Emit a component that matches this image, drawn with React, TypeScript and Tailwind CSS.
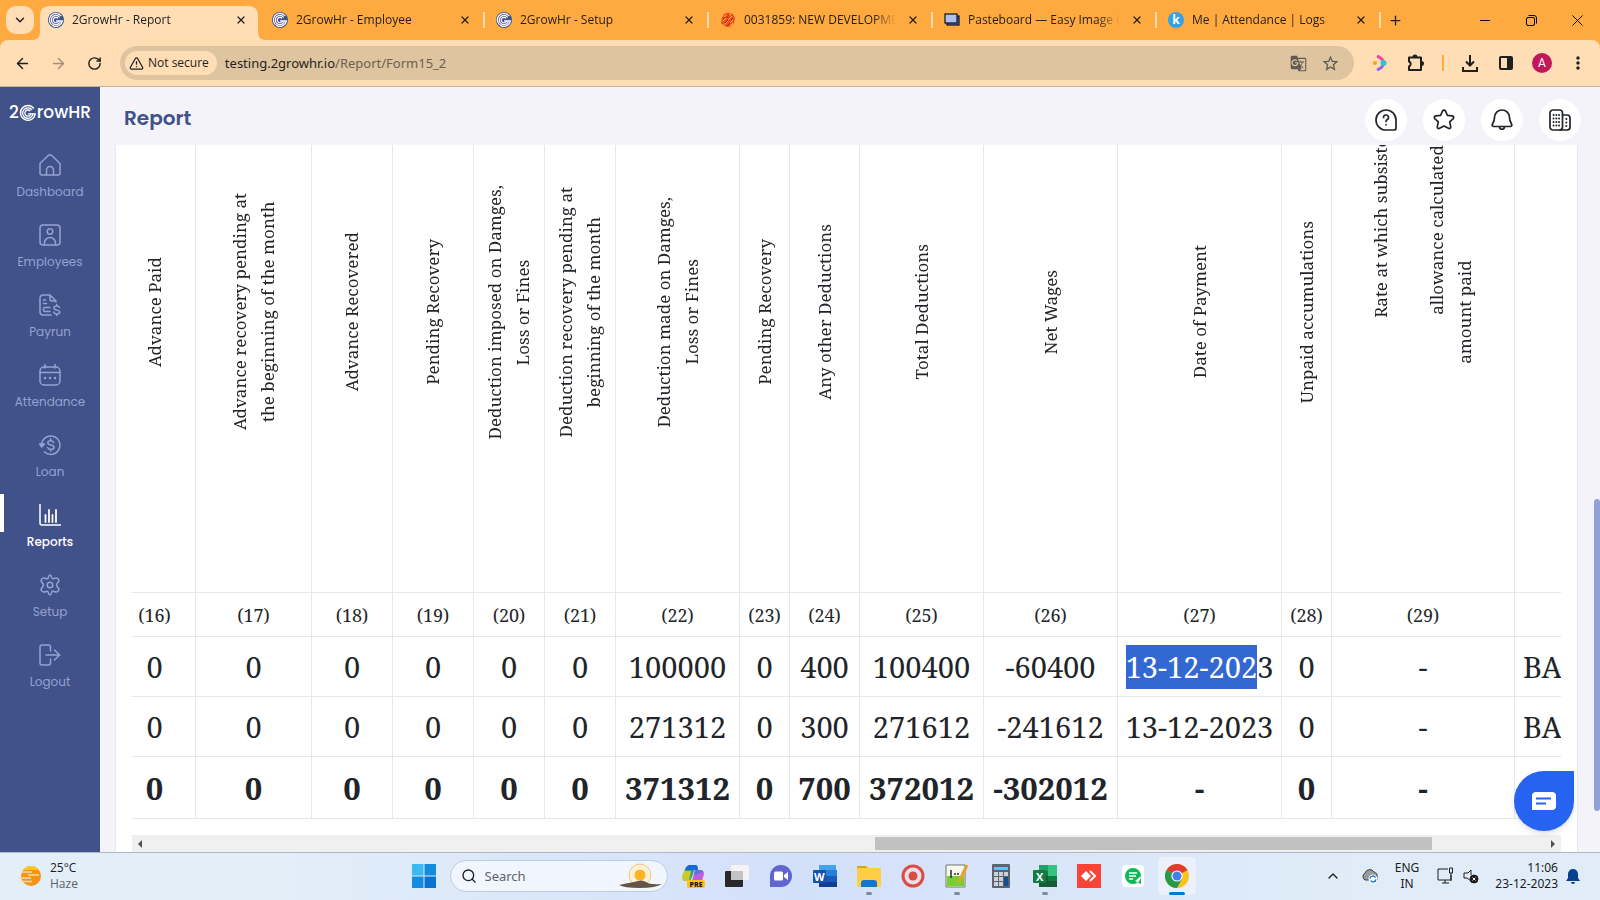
import type { ReactNode } from 'react';
import { ArrowLeft, ArrowRight, RotateCw, TriangleAlert, X, Plus, ChevronDown, ChevronUp, Search } from 'lucide-react';
import { MdGTranslate, MdStarBorder, MdMoreVert } from 'react-icons/md';

const tabs = [
  { title: '2GrowHr - Report', icon: 'grow', active: true },
  { title: '2GrowHr - Employee', icon: 'grow' },
  { title: '2GrowHr - Setup', icon: 'grow' },
  { title: '0031859: NEW DEVELOPMENT', icon: 'mantis' },
  { title: 'Pasteboard — Easy Image Up', icon: 'paste' },
  { title: 'Me | Attendance | Logs', icon: 'keka' },
];

const navItems = ['Dashboard', 'Employees', 'Payrun', 'Attendance', 'Loan', 'Reports', 'Setup', 'Logout'];

type Column = { no: string; lines: string[]; values: string[]; width: string };

const columns: Column[] = [
  { no: '(16)', lines: ['Advance Paid'], values: ['0', '0', '0'], width: 'w-16' },
  { no: '(17)', lines: ['Advance recovery pending at', 'the beginning of the month'], values: ['0', '0', '0'], width: 'w-[116px]' },
  { no: '(18)', lines: ['Advance Recovered'], values: ['0', '0', '0'], width: 'w-[81px]' },
  { no: '(19)', lines: ['Pending Recovery'], values: ['0', '0', '0'], width: 'w-[81px]' },
  { no: '(20)', lines: ['Deduction imposed on Damges,', 'Loss or Fines'], values: ['0', '0', '0'], width: 'w-[71px]' },
  { no: '(21)', lines: ['Deduction recovery pending at', 'beginning of the month'], values: ['0', '0', '0'], width: 'w-[71px]' },
  { no: '(22)', lines: ['Deduction made on Damges,', 'Loss or Fines'], values: ['100000', '271312', '371312'], width: 'w-[124px]' },
  { no: '(23)', lines: ['Pending Recovery'], values: ['0', '0', '0'], width: 'w-[50px]' },
  { no: '(24)', lines: ['Any other Deductions'], values: ['400', '300', '700'], width: 'w-[70px]' },
  { no: '(25)', lines: ['Total Deductions'], values: ['100400', '271612', '372012'], width: 'w-[124px]' },
  { no: '(26)', lines: ['Net Wages'], values: ['-60400', '-241612', '-302012'], width: 'w-[134px]' },
  { no: '(27)', lines: ['Date of Payment'], values: ['13-12-2023', '13-12-2023', '-'], width: 'w-[164px]' },
  { no: '(28)', lines: ['Unpaid accumulations'], values: ['0', '0', '0'], width: 'w-[50px]' },
  { no: '(29)', lines: ['Rate at which subsistence', '', 'allowance calculated', 'amount paid'], values: ['-', '-', '-'], width: 'w-[183px]' },
];

function GrowMark({ size, ring }: { size: number; ring?: boolean }) {
  return (
    <svg width={size} height={size} viewBox="0 0 20 20" fill="none" stroke="#fff" strokeWidth="1.5">
      {ring && <circle cx="10" cy="10" r="10" fill="#41518a" stroke="none" />}
      <path d="M16.5 5A8.2 8.2 0 1 0 18 11H10" />
      <path d="M14.5 6.6A5.8 5.8 0 1 0 15.600 11" />
      <path d="M12.600 8A3.4 3.4 0 1 0 13.200 11" />
    </svg>
  );
}

function TabIcon({ name }: { name: string }) {
  if (name === 'grow') return <GrowMark size={16} ring />;
  if (name === 'mantis') {
    return (
      <svg width="16" height="16" viewBox="0 0 16 16">
        <path d="M4 2l4-1.500 5 1.500 2 4-1 5-4 4-5-.5-4-3.500 1-5z" fill="#f0501e" />
        <path d="M4 5l2-2M8 4l3-2M3 9l3-3M8 8l4-4M4 13l4-4M8 13l5-5M10 14l3-3" stroke="#ffb04a" strokeWidth="1" fill="none" />
        <path d="M3 7l2-2M7 6l2-3M5 11l3-3M11 8l2-2M7 14l3-3" stroke="#9c2410" strokeWidth="1" fill="none" />
      </svg>
    );
  }
  if (name === 'paste') {
    return (
      <svg width="16" height="16" viewBox="0 0 16 16" stroke="#0b1026" strokeWidth="1.200">
        <rect x="3" y="4" width="12" height="9" fill="#5c79c4" />
        <rect x="1" y="2" width="12" height="9" fill="#b0c0ea" />
      </svg>
    );
  }
  return (
    <span className="flex size-4 items-center justify-center rounded-full bg-[#35a0e8] text-xs leading-4 font-bold text-white">k</span>
  );
}

function NavIcon({ name }: { name: string }) {
  const shapes: Record<string, ReactNode> = {
    Dashboard: <path d="M1 9.500 9 1.700a3 3 0 0 1 4 0L21 9.500V19a2 2 0 0 1-2 2H3a2 2 0 0 1-2-2zM7.500 21v-5a3.500 3.500 0 0 1 7 0v5" />,
    Employees: (
      <>
        <rect x="1" y="1" width="20" height="20" rx="3" />
        <circle cx="11" cy="7.500" r="2.800" />
        <path d="M5.500 20.500v-1.500a5.500 5.500 0 0 1 11 0v1.500" />
      </>
    ),
    Payrun: (
      <>
        <path d="M12 21H4a3 3 0 0 1-3-3V4a3 3 0 0 1 3-3h7l6 6v1M11 1v4a2 2 0 0 0 2 2h4M4.500 6h2M4.500 9.500h3M11 13.500H6a1.500 1.500 0 0 0-1.500 1.500v1a1.500 1.500 0 0 0 1.500 1.500h5" />
        <path d="M20.500 13.500c-.5-1.200-1.500-1.500-2.800-1.500-1.500 0-2.700.7-2.700 2 0 3 5.800 1.300 5.800 4 0 1.300-1.300 2-3 2-1.500 0-2.600-.6-3-1.800M17.800 10.500V12M17.800 20v1.500" />
      </>
    ),
    Attendance: (
      <>
        <rect x="1" y="3" width="20" height="18" rx="4" />
        <path d="M1 8.500h20M6 .5V4M16 .5V4" />
        <path d="M6 14h.1M11 14h.1M16 14h.1" strokeWidth="2.400" />
      </>
    ),
    Loan: (
      <>
        <path d="M2.500 11a9.200 9.200 0 1 1 3 7" />
        <path d="M.5 10l2.200 3 2.800-3z" fill="currentColor" />
        <path d="M14.600 8.500c-.4-1.300-1.500-1.800-2.900-1.800-1.600 0-2.900.7-2.900 2.100 0 3.200 6.200 1.300 6.200 4.400 0 1.400-1.400 2.200-3.200 2.200-1.600 0-2.800-.7-3.200-2M11.700 4.800v1.900M11.700 15.400v1.900" />
      </>
    ),
    Reports: (
      <>
        <path d="M1 0v19a2 2 0 0 0 2 2h19" />
        <path d="M6.500 11v7M10 6v12M13.500 11v7M17 6v12" strokeWidth="1.800" />
      </>
    ),
    Setup: (
      <>
        <path d="M9.300 3.500Q10 1 11 1t1.700 2.500Q13.300 5.300 15 4.500c2-.8 3.500-.8 4.500.8 1 1.700.3 2.500-1 3.700-1.200 1.200-1.200 2.800 0 4 1.300 1.200 2 2 1 3.700-1 1.600-2.500 1.600-4.500.8-1.700-.8-2.100-.3-2.300 1Q12 21 11 21t-1.700-2.500Q8.700 16.700 7 17.500c-2 .8-3.500.8-4.500-.8-1-1.700-.3-2.500 1-3.700 1.200-1.200 1.200-2.800 0-4-1.300-1.200-2-2-1-3.700 1-1.600 2.500-1.600 4.500-.8 1.700.8 2.300-.2 2.300-1z" />
        <circle cx="11" cy="11" r="2.800" />
      </>
    ),
    Logout: <path d="M11.500 7V3a2 2 0 0 0-2-2H3a2 2 0 0 0-2 2v16a2 2 0 0 0 2 2h6.500a2 2 0 0 0 2-2v-4M7 11h14M15.500 6l5 5-5 5" />,
  };
  return (
    <svg className="size-[22px]" viewBox="0 0 22 22" fill="none" stroke="currentColor" strokeWidth="1.500" strokeLinecap="round" strokeLinejoin="round">
      {shapes[name]}
    </svg>
  );
}

function BrowserTabs() {
  return (
    <div className="flex h-10 shrink-0 bg-[#ffaa40] text-[#1f1f1f]">
      <button aria-label="Search tabs" className="mt-[6px] ml-[6px] flex h-7 w-7 shrink-0 items-center justify-center rounded-[10px] bg-[#ffddb5]">
        <ChevronDown size={14} strokeWidth={2.500} />
      </button>
      <div className="ml-[6px] flex">
        {tabs.map((tab) => (
          <div key={tab.title} className="relative flex w-56 items-center">
            {tab.active && (
              <svg className="absolute top-[6px] -left-2 h-[34px] w-[234px]" viewBox="0 0 234 34" fill="#ffddb5">
                <path d="M0 34q8 0 8-8V10Q8 0 18 0h198q10 0 10 10v16q0 8 8 8z" />
              </svg>
            )}
            <div className="relative ml-2 flex w-4 shrink-0"><TabIcon name={tab.icon} /></div>
            <span className="relative ml-2 w-[152px] shrink-0 overflow-hidden mask-r-from-85% font-['Open_Sans',sans-serif] text-xs leading-5 whitespace-nowrap">{tab.title}</span>
            <button aria-label={`Close ${tab.title}`} className="relative ml-[9px] flex size-4 shrink-0 items-center justify-center">
              <X size={12} strokeWidth={2.500} />
            </button>
            {!tab.active && <span className="ml-[10px] h-4 w-[2px] shrink-0 bg-[#ffddb5]" />}
          </div>
        ))}
        <button aria-label="New tab" className="flex w-[22px] items-center justify-center"><Plus size={15} strokeWidth={2} /></button>
      </div>
      <div className="ml-auto flex text-black">
        <button aria-label="Minimize" className="flex w-[46px] items-center justify-center"><span className="h-px w-[10px] bg-black" /></button>
        <button aria-label="Restore" className="flex w-[46px] items-center justify-center">
          <svg width="11" height="11" viewBox="0 0 11 11" fill="none" stroke="currentColor"><rect x=".5" y="2.500" width="8" height="8" rx="1.500" /><path d="M2.500 .5H8a2.500 2.500 0 0 1 2.500 2.500v5.500" /></svg>
        </button>
        <button aria-label="Close" className="flex w-[46px] items-center justify-center">
          <svg width="11" height="11" viewBox="0 0 11 11" stroke="currentColor"><path d="M.5.5l10 10M10.500.5l-10 10" /></svg>
        </button>
      </div>
    </div>
  );
}

function Toolbar() {
  const btn = 'flex w-9 shrink-0 items-center justify-center';
  return (
    <div className="shrink-0 bg-[#ffaa40]">
      <div className="flex h-[47px] rounded-t-lg border-b border-[#cbb092] bg-[#ffddb5] px-1 py-[6px] text-[#1f1f1f]">
        <button aria-label="Back" className={btn}><ArrowLeft size={17} /></button>
        <button aria-label="Forward" className={`${btn} text-[#a48e76]`}><ArrowRight size={17} /></button>
        <button aria-label="Reload" className={btn}><RotateCw size={15} strokeWidth={2.300} /></button>
        <div className="ml-2 flex flex-1 items-center rounded-full bg-[#dfc4a0] pl-[5px]">
          <button className="flex h-6 items-center gap-1 rounded-full bg-[#ffddb5] px-2 pl-1 font-['Open_Sans',sans-serif] text-xs font-medium">
            <TriangleAlert size={15} /> Not secure
          </button>
          <div className="ml-2 h-6 flex-1 font-['Noto_Sans',sans-serif] text-[13px] leading-6">
            <span>testing.2growhr.io</span><span className="text-[#6b5f50]">/Report/Form15_2</span>
          </div>
          <button aria-label="Translate" className="flex w-8 justify-center text-[#5f5a52]"><MdGTranslate size={17} /></button>
          <button aria-label="Bookmark" className="mr-2 flex w-8 justify-center text-[#5f5a52]"><MdStarBorder size={19} /></button>
        </div>
        <button aria-label="Extension" className={`${btn} ml-2`}>
          <svg width="14" height="16" viewBox="0 0 14 16" fill="none" strokeWidth="3">
            <path d="M4 1q5 2 6 5" stroke="#f4479b" /><path d="M4 15q5-2 6-5" stroke="#9a5bf0" />
            <circle cx="10.500" cy="8" r="3" fill="#2cc4d0" /><circle cx="2" cy="8" r="2" fill="#ff9d1e" />
          </svg>
        </button>
        <button aria-label="Extensions" className={btn}>
          <svg width="18" height="18" viewBox="0 0 18 18" fill="none" stroke="currentColor" strokeWidth="2" strokeLinejoin="round">
            <path d="M2 3.500h12v12.500H2v-3.500a2.700 2.700 0 0 0 0-5z" />
            <path d="M6.500 3a1.500 1.500 0 0 1 3 0M14.500 8a1.500 1.500 0 0 1 0 3" fill="currentColor" />
          </svg>
        </button>
        <div className="flex w-[18px] items-center justify-center"><span className="h-4 w-[2px] bg-[#ffaa40]" /></div>
        <button aria-label="Downloads" className={btn}>
          <svg width="16" height="17" viewBox="0 0 16 17" fill="none" stroke="currentColor" strokeWidth="2"><path d="M8 0v10M4 6.500l4 4 4-4M1 12v4h14v-4" /></svg>
        </button>
        <button aria-label="Side panel" className={btn}>
          <svg width="14" height="14" viewBox="0 0 14 14" fill="currentColor"><rect x="1" y="1" width="12" height="12" rx="1" fill="none" stroke="currentColor" strokeWidth="2" /><path d="M8 1h5v12H8z" /></svg>
        </button>
        <button aria-label="Profile" className={btn}><span className="size-5 rounded-full bg-[#c2185b] font-['Roboto',sans-serif] text-xs leading-5 text-white">A</span></button>
        <button aria-label="Menu" className={btn}><MdMoreVert size={20} /></button>
      </div>
    </div>
  );
}

function Sidebar() {
  return (
    <aside className="w-[100px] shrink-0 bg-[#41518a] font-[Poppins,Inter,sans-serif]">
      <div className="flex h-14 items-center justify-center pb-1 text-[17px] font-medium text-white">
        2<GrowMark size={18} />rowHR
      </div>
      <nav className="pt-px">
        {navItems.map((item) => (
          <a key={item} href="#" className={`relative flex h-[70px] flex-col items-center pt-[10px] text-xs leading-5 ${item === 'Reports' ? 'font-medium text-white' : 'text-[#95a2d2]'}`}>
            {item === 'Reports' && <span className="absolute top-0 left-0 h-[38px] w-1 bg-white" />}
            <NavIcon name={item} />
            <span className="mt-[6px]">{item}</span>
          </a>
        ))}
      </nav>
    </aside>
  );
}

function HeaderButton({ label, children }: { label: string; children: ReactNode }) {
  return (
    <button aria-label={label} className="flex size-[42px] items-center justify-center rounded-full bg-white text-[#212529]">
      <svg className="size-[22px]" viewBox="0 0 22 22" fill="none" stroke="currentColor" strokeWidth="1.700" strokeLinecap="round" strokeLinejoin="round">{children}</svg>
    </button>
  );
}

// vertical offsets of the wrapped lines in the last header cell
function linePad(line: string) {
  if (line.startsWith('Rate')) return 'ps-[197px]';
  if (line.startsWith('allowance')) return 'ps-[164px]';
  return '';
}

function ReportTable() {
  const cell = 'border-r border-b border-[#e8e8e8] p-0';
  return (
    <table className="w-[1560px] min-w-full shrink-0 table-fixed border-separate border-spacing-0 text-center font-['Noto_Serif','DejaVu_Serif_Condensed','DejaVu_Serif',serif] text-[#212529]">
      <colgroup>
        {columns.map((c) => <col key={c.no} className={c.width} />)}
        <col />
      </colgroup>
      <thead className="leading-7">
        <tr className="h-[561px] text-[17px]">
          {columns.map((c, i) => (
            <th key={c.no} scope="col" className={`${cell} font-normal ${i === 0 ? 'pr-[18px]' : ''}`}>
              <div className="inline-block rotate-180 align-middle whitespace-nowrap [writing-mode:vertical-rl]">
                {c.lines.map((line, n) => <div key={n} className={`min-w-7 ${linePad(line)}`}>{line}</div>)}
              </div>
            </th>
          ))}
          <th className={cell} />
        </tr>
        <tr className="h-11 text-lg leading-7">
          {columns.map((c, i) => <td key={c.no} className={`${cell} ${i === 0 ? 'pr-[18px]' : ''}`}>{c.no}</td>)}
          <td className={cell} />
        </tr>
      </thead>
      <tbody className="leading-[44px]">
        {[0, 1, 2].map((row) => (
          <tr key={row} className={row === 2 ? 'h-[62px] text-[31px] font-bold' : 'h-[60px] text-[29px]'}>
            {columns.map((c, i) => (
              <td key={c.no} className={`${cell} whitespace-nowrap ${i === 0 ? 'pr-[18px]' : ''}`}>
                {row === 0 && c.no === '(27)' ? (
                  <><span className="inline-block bg-[#3367d1] text-white">13-12-202</span>3</>
                ) : c.values[row]}
              </td>
            ))}
            <td className={`${cell} pl-2 text-left`}>{row < 2 && 'BANK'}</td>
          </tr>
        ))}
      </tbody>
    </table>
  );
}

function ReportPage() {
  return (
    <main className="relative flex min-w-0 flex-1 flex-col bg-[#f3f3f9]">
      <header className="flex h-[58px] shrink-0 items-center pt-1 pr-[19px] pl-6">
        <h1 className="font-[Poppins,Inter,sans-serif] text-xl font-semibold text-[#41518a]">Report</h1>
        <div className="ml-auto flex gap-4 pt-1">
          <HeaderButton label="Help">
            <path d="M11 1a10 10 0 0 0 0 20h8a2 2 0 0 0 2-2v-8A10 10 0 0 0 11 1z" />
            <path d="M8.500 8.500a2.500 2.500 0 1 1 3.500 2.300c-.7.400-1 .8-1 1.700M11 15.500v.2" />
          </HeaderButton>
          <HeaderButton label="Favourites">
            <path d="M9.500 2a1.700 1.700 0 0 1 3 0l1.900 4.300 4.800.5c1.500.2 2 1.700 1 2.800l-3.500 3.200 1 4.800c.3 1.500-1 2.400-2.300 1.700L11 17l-4.400 2.300c-1.300.7-2.600-.2-2.300-1.700l1-4.800L1.800 9.600c-1-1.100-.5-2.600 1-2.800l4.800-.5z" />
          </HeaderButton>
          <HeaderButton label="Notifications">
            <path d="M11 1a7.500 7.500 0 0 0-7.500 7.500c0 3-.8 4.500-2 6.500-.8 1.500 0 2.500 1.500 2.500h16c1.500 0 2.300-1 1.500-2.500-1.200-2-2-3.500-2-6.500A7.500 7.500 0 0 0 11 1zM8.500 18c.5 3 4.500 3 5 0" />
          </HeaderButton>
          <HeaderButton label="Company">
            <rect x="1" y="1" width="12.500" height="20" rx="3" />
            <path d="M13.500 6H18a3 3 0 0 1 3 3v9a3 3 0 0 1-3 3h-7" />
            <path d="M4.500 6h.1M7.300 6h.1M10 6h.1M4.500 9.500h.1M7.300 9.500h.1M10 9.500h.1M4.500 13h.1M7.300 13h.1M10 13h.1M4.500 16.500h.1M7.300 16.500h.1M10 16.500h.1M17.300 10h.1M17.300 13.500h.1M17.300 17h.1" strokeWidth="1.900" />
          </HeaderButton>
        </div>
      </header>
      <section className="mr-[22px] ml-[15px] flex min-h-0 flex-1 flex-col border-x border-[#e9e9ef] bg-white px-4">
        <div className="mb-4 flex min-h-0 flex-1 flex-col items-start justify-end overflow-hidden">
          <ReportTable />
        </div>
        <div className="flex h-[17px] shrink-0 items-center bg-[#f0f0f0] px-[6px]">
          <span className="border-y-4 border-r-4 border-y-transparent border-r-[#505050]" />
          <span className="flex-[732]" />
          <span className="h-[13px] flex-[557] bg-[#c1c1c1]" />
          <span className="flex-[119]" />
          <span className="border-y-4 border-l-4 border-y-transparent border-l-[#505050]" />
        </div>
      </section>
      <span className="absolute top-[412px] right-0 h-[312px] w-[6px] rounded bg-[#93a0d5]" />
      <button aria-label="Open chat" className="absolute right-[26px] bottom-[21px] flex size-[60px] items-center justify-center rounded-full rounded-tr-lg bg-[#2563f0] shadow-md">
        <svg width="24" height="18" viewBox="0 0 24 18"><path d="M4 0h16q4 0 4 4v10q0 4-4 4H0V4q0-4 4-4z" fill="#fff" /><path d="M4 6.500h15M4 11.500h10" stroke="#2563f0" strokeWidth="2" /></svg>
      </button>
    </main>
  );
}

const apps: { label: string; running?: boolean; icon: ReactNode }[] = [
  { label: 'Copilot', icon: (
    <>
      <path d="M2 15C3 8 4 1 9 1h6l-4 12-2 4H5q-3 0-3-2z" fill="#2faa62" /><path d="M4 6q2-5 5-5h6q2 0 2 5z" fill="#1768d8" /><path d="M1 13q1-4 2-6h7l-2 10H4q-3 0-3-4z" fill="#c9c82f" />
      <path d="M14 6h5q4 0 4 4l-2 7H11z" fill="#c35be0" /><path d="M14 6h5q3 0 3 2l-9 3z" fill="#5f6fe8" />
      <rect x="6" y="16" width="18" height="8" rx="2" fill="#fec50c" /><text x="8.500" y="22.500" fontSize="7" fontWeight="800" fill="#1c1c1c" fontFamily="Open Sans">PRE</text>
    </>
  ) },
  { label: 'Task view', icon: <><rect y="7" width="18" height="16" rx="1" fill="#282828" /><rect x="6" y="1" width="18" height="15" rx="1" fill="#f4f4f4" /><path d="M6 7h12v9H6z" fill="#c4c4c4" /></> },
  { label: 'Chat', icon: <><path d="M12 1a11 11 0 1 1 0 22H1V12A11 11 0 0 1 12 1z" fill="#6165cf" /><rect x="5" y="7.500" width="9" height="9" rx="1.500" fill="#fff" /><path d="M15 11l4-3v8l-4-3z" fill="#fff" /></> },
  { label: 'Word', icon: <><path d="M6 1h17v6H6z" fill="#41a5ee" /><path d="M6 6h18v6H6z" fill="#2b7cd3" /><path d="M6 12h18v6H6z" fill="#185abd" /><path d="M6 18h18v5H6z" fill="#103f91" /><rect y="6" width="13" height="13" rx="1" fill="#1750ac" /><text x="1" y="16.500" fontSize="11" fontWeight="700" fill="#fff" fontFamily="Open Sans">W</text></> },
  { label: 'File Explorer', running: true, icon: <><path d="M0 2h9l2 2v4H0z" fill="#dfa20f" /><rect y="4" width="24" height="19" rx="1" fill="#ffcd46" /><path d="M4 23v-4q0-3 3-3h10q3 0 3 3v4z" fill="#1277cc" /></> },
  { label: 'Recorder', icon: <><circle cx="12" cy="12" r="10" fill="#e9dfe9" stroke="#da4d43" strokeWidth="3" /><circle cx="12" cy="12" r="4.500" fill="#da4d43" /></> },
  { label: 'Notepad++', running: true, icon: <><path d="M1 1h19v22H1z" fill="#f5f9ee" stroke="#6f7866" /><path d="M2 12h17v10H2z" fill="#79cf31" /><path d="M6 6v8M9 10h2M12 10h2" stroke="#2b2b2b" strokeWidth="1.500" /><path d="M22 1 14 18" stroke="#e9a22b" strokeWidth="3" /></> },
  { label: 'Calculator', icon: <><rect x="3" width="18" height="24" rx="1" fill="#5c6470" /><path d="M5 3h14v3H5z" fill="#4bd0f5" /><path d="M5 8h4v4H5zm5 0h4v4h-4zm5 0h4v4h-4zM5 13h4v4H5zm5 0h4v4h-4zM5 18h4v4H5zm5 0h4v4h-4z" fill="#cdd1d8" /><path d="M15 13h4v9h-4z" fill="#14508f" /></> },
  { label: 'Excel', running: true, icon: <><path d="M6 1h9v11H6z" fill="#21a366" /><path d="M15 1h9v11h-9z" fill="#33c481" /><path d="M6 7h9v5H6z" fill="#107c41" /><path d="M6 12h18v11H6z" fill="#185c37" /><path d="M15 12h9v5h-9z" fill="#107c41" /><rect y="6" width="13" height="13" rx="1" fill="#107c41" /><text x="3" y="16.500" fontSize="11" fontWeight="700" fill="#fff" fontFamily="Open Sans">X</text></> },
  { label: 'AnyDesk', icon: <><path d="M0 0h24v24H0z" fill="#fb4237" /><path d="M9 7l5 5-5 5-5-5z" fill="#fff" /><path d="M13 7l5 5-5 5" fill="none" stroke="#fff" strokeWidth="2" /></> },
  { label: 'Messages', icon: <><rect x="1" y="1" width="22" height="22" rx="4" fill="#fff" /><path d="M12 4a8 8 0 1 1 0 16 8 8 0 0 1 0-16zM14 17l6 3v-8z" fill="#0cba57" /><path d="M8 9h8M8 12h7M8 15h4" stroke="#fff" strokeWidth="1.700" /></> },
  { label: 'Chrome', icon: <><circle cx="12" cy="12" r="12" fill="#fcc31e" /><path d="M12 12 1.600 6A12 12 0 0 1 22.400 6z" fill="#df3b30" /><path d="M12 12 1.600 6A12 12 0 0 0 12 24l5-9z" fill="#269a4b" /><circle cx="12" cy="12" r="5.600" fill="#fff" /><circle cx="12" cy="12" r="4.500" fill="#3f7fee" /></> },
];

function Taskbar() {
  return (
    <footer className="grid h-12 shrink-0 grid-cols-[1fr_auto_1fr] items-center border-t border-[#aeb8c8] bg-linear-to-r from-[#e3eff8] from-15% via-[#d3e0fa] via-50% to-[#e0edf8] to-85% pb-[2px] font-['Noto_Sans',sans-serif] text-xs leading-4 text-[#1c1c1c]">
      <div className="flex items-center gap-2 pl-[19px]">
        <svg width="23" height="22" viewBox="0 0 23 22">
          <circle cx="12" cy="11" r="10" fill="#f59414" /><path d="M4 5a10 10 0 0 1 16 0z" fill="#ffc71a" />
          <path d="M2 7h11M9 10h11M0 13h12M0 16.500h13" stroke="#f5dcae" strokeWidth="1.500" />
        </svg>
        <div className="font-['Open_Sans',sans-serif]"><div>25°C</div><div className="text-[#5c6166]">Haze</div></div>
      </div>
      <div className="flex items-center">
        <button aria-label="Start" className="flex w-11 justify-center">
          <svg width="24" height="24" viewBox="0 0 24 24" fill="#128ce0"><path d="M0 0h11.500v11.500H0z" fill="#3cb8f5" /><path d="M12.500 0H24v11.500H12.500zM0 12.500h11.500V24H0z" /><path d="M12.500 12.500H24V24H12.500z" fill="#0874cf" /></svg>
        </button>
        <label className="mr-[3px] ml-1 flex h-8 w-[218px] items-center rounded-full border border-[#c0cbe0] bg-[#f1f5fd] pl-[10px]">
          <Search size={16} />
          <input aria-label="Search" placeholder="Search" className="mr-1 ml-2 w-[130px] bg-transparent text-[13px] outline-none placeholder:text-[#5f646b]" />
          <svg width="44" height="26" viewBox="0 0 44 26">
            <circle cx="21" cy="12" r="11" fill="#fbf0d8" stroke="#f5c67e" /><circle cx="21" cy="12" r="5.500" fill="#ffb41f" />
            <path d="M0 22q9-2 15-3 8-3 12 0t16 2q-6 4-22 4T0 22z" fill="#665449" />
          </svg>
        </label>
        {apps.map((app) => (
          <button key={app.label} aria-label={app.label} className="relative flex w-11 justify-center py-[7px]">
            {app.label === 'Chrome' && <span className="absolute inset-x-[3px] inset-y-0 rounded bg-[#ebf0fb]" />}
            <svg className="relative" width="24" height="24" viewBox="0 0 24 24">{app.icon}</svg>
            {app.running && <span className="absolute bottom-0 h-[3px] w-[6px] rounded-full bg-[#828a96]" />}
            {app.label === 'Chrome' && <span className="absolute bottom-0 h-[3px] w-4 rounded-full bg-[#0a78d4]" />}
          </button>
        ))}
      </div>
      <div className="flex items-center justify-end pr-5">
        <button aria-label="Hidden icons" className="mr-5"><ChevronUp size={16} strokeWidth={2} /></button>
        <svg width="17" height="16" viewBox="0 0 17 16">
          <path d="M4 12a4 4 0 0 1 0-7 5 5 0 0 1 9-1 4 4 0 0 1 3 5v3z" fill="#9a9a9a" stroke="#3a3a3a" />
          <circle cx="12" cy="11" r="4.500" fill="#fff" /><path d="M9 10.500a3 3 0 0 1 5.500-1M15 11.500a3 3 0 0 1-5.500 1" stroke="#1173c8" strokeWidth="1.400" fill="none" />
        </svg>
        <div className="ml-[17px] text-center"><div>ENG</div><div>IN</div></div>
        <svg className="ml-[18px]" width="17" height="17" viewBox="0 0 17 17" fill="none" stroke="currentColor"><path d="M11 2H1v11h13V8M5 16h7M8 13v3M12.500 1h3v5h-3zM14 6v8" /></svg>
        <svg className="ml-[9px]" width="16" height="16" viewBox="0 0 16 16" fill="none" stroke="currentColor"><path d="M5 5H1v5h3l4 3M5 5l3-3v5" /><circle cx="11" cy="11" r="4" fill="#1c1c1c" /><path d="M9.500 9.500l3 3M12.500 9.500l-3 3" stroke="#fff" /></svg>
        <div className="ml-4 text-right"><div>11:06</div><div>23-12-2023</div></div>
        <svg className="ml-2" width="14" height="16" viewBox="0 0 14 16" fill="#08418f"><path d="M7 1a5 5 0 0 0-5 5v4l-2 3h14l-2-3V6a5 5 0 0 0-5-5zM5 14h4a2 2 0 0 1-4 0z" /></svg>
      </div>
    </footer>
  );
}

export default function App() {
  return (
    <div className="flex h-screen flex-col overflow-hidden">
      <BrowserTabs />
      <Toolbar />
      <div className="flex min-h-0 flex-1">
        <Sidebar />
        <ReportPage />
      </div>
      <Taskbar />
    </div>
  );
}
